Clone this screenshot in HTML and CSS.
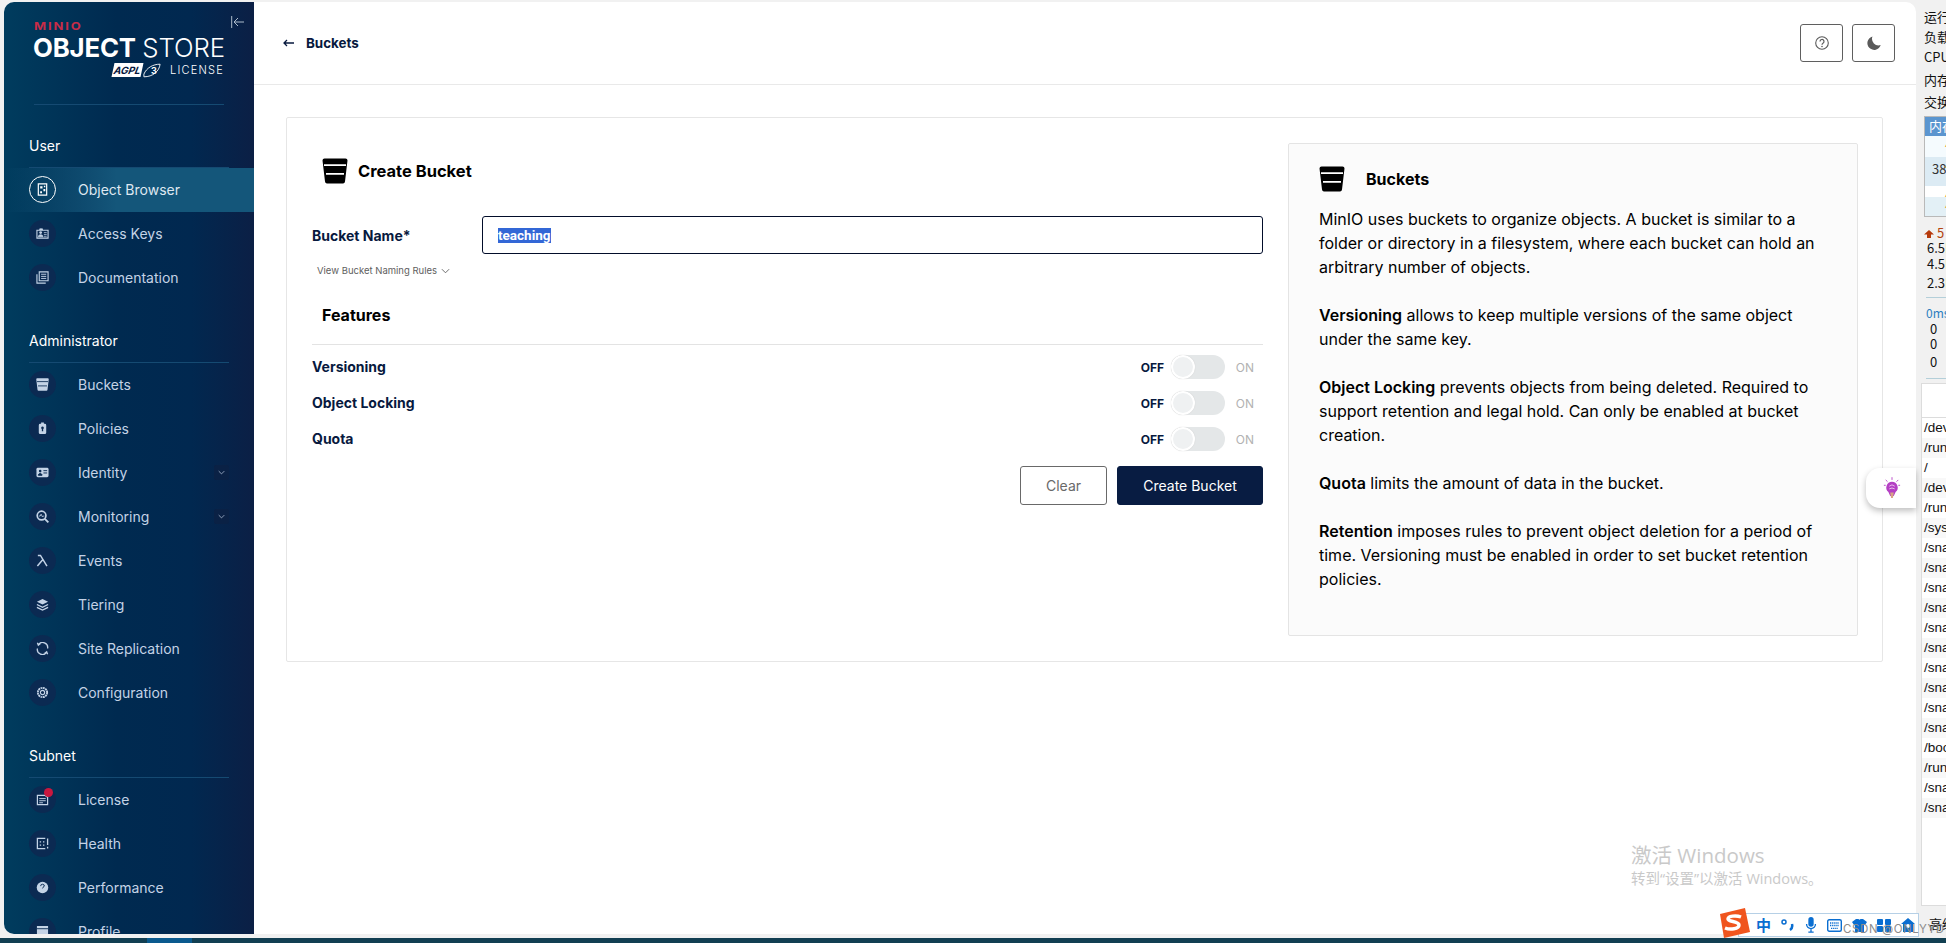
FILE: index.html
```html
<!DOCTYPE html>
<html lang="en">
<head>
<meta charset="utf-8">
<title>Create Bucket</title>
<link rel="stylesheet" href="styles.css">
</head>
<body>
<svg class="defs" width="0" height="0" aria-hidden="true">
  <symbol id="bucket" viewBox="0 0 26 26">
    <path d="M.5 2.500Q.5 .5 2.500 .5H23.500Q25.500 .5 25.500 2.500L23 23.500Q22.800 25.500 21 25.500H5Q3.200 25.500 3 23.500Z" fill="currentColor"/>
    <path class="bk-line" d="M2 7.200H24M4 15.800H22" stroke-width="1.700" fill="none"/>
  </symbol>
  <symbol id="chev" viewBox="0 0 10 6"><path d="M1 1l4 4 4-4" fill="none" stroke="currentColor" stroke-width="1"/></symbol>
</svg>

<div class="window">
  <aside class="sidebar">
    <svg class="collapse" viewBox="0 0 13 12"><path d="M.7 0V12M13 6H3M7 2L3 6l4 4" fill="none" stroke="#aebccb" stroke-width="1"/></svg>
    <div class="logo">
      <div class="logo-minio">MINIO</div>
      <div class="logo-main"><b>OBJECT</b> <span>STORE</span></div>
      <div class="logo-lic">
        <span class="agpl"><i>AGPL</i><svg viewBox="0 0 20 16" width="18" height="15"><path d="M1 12C4 5 11 1 19 1 18 9 11 15 1 15Z" fill="none" stroke="#fff" stroke-width="1"/><text x="9" y="12" class="agpl-3">3</text></svg></span>
        <span class="lic">LICENSE</span>
      </div>
    </div>

    <div class="group-title">User</div>
    <a class="item active"><span class="ic"><svg viewBox="0 0 14 14"><path d="M2.500 1h9v12h-9z" fill="none" stroke="currentColor" stroke-width="1.300"/><path d="M4.500 3.500h2.500v2.500h-2.500zM8 6.500h2v2.500h-2zM4.500 9h2v2h-2zM8.500 3h1.500v1.500h-1.500z" fill="currentColor"/></svg></span>Object Browser</a>
    <a class="item"><span class="ic"><svg viewBox="0 0 14 14"><path d="M1 3.500h12v8.500h-12z" fill="none" stroke="currentColor" stroke-width="1.200"/><circle cx="5" cy="6" r="1.500" fill="currentColor"/><path d="M2.500 10.500c0-3 5-3 5 0zM8.500 6h3M8.500 8h3M8.500 10h3M4 3.500v-1.500h3v1.500" fill="currentColor" stroke="currentColor" stroke-width=".8"/></svg></span>Access Keys</a>
    <a class="item"><span class="ic"><svg viewBox="0 0 14 14"><path d="M3.500 1h9.500v9.500h-9.500zM1 3.500v9.500h9.500" fill="none" stroke="currentColor" stroke-width="1.200"/><path d="M5.500 3.500h5.500M5.500 5.800h5.500M5.500 8h5.500" stroke="currentColor" stroke-width="1"/></svg></span>Documentation</a>

    <div class="group-title">Administrator</div>
    <a class="item"><span class="ic"><svg class="big"><use href="#bucket"/></svg></span>Buckets</a>
    <a class="item"><span class="ic"><svg viewBox="0 0 14 14"><path d="M5.500 .5h3v1.500h1q1.500 0 1.500 1.500v8q0 1.500-1.500 1.500h-5q-1.500 0-1.500-1.500v-8q0-1.500 1.500-1.500h1z" fill="currentColor"/><path d="M7 4.800a1.500 1.500 0 0 1 .7 2.800v2.400h-1.400v-2.400a1.500 1.500 0 0 1 .7-2.800z" fill="#0b2a52"/></svg></span>Policies</a>
    <a class="item"><span class="ic"><svg viewBox="0 0 14 14"><rect x=".5" y="2" width="13" height="10" rx="1.500" fill="currentColor"/><circle cx="4.500" cy="5.500" r="1.400" fill="#0b2a52"/><path d="M2.500 10c0-2.500 4-2.500 4 0zM8 5h4M8 7.500h4" fill="#0b2a52" stroke="#0b2a52"/></svg></span>Identity<span class="exp"><svg><use href="#chev"/></svg></span></a>
    <a class="item"><span class="ic"><svg viewBox="0 0 14 14"><circle cx="6" cy="6" r="4.700" fill="none" stroke="currentColor" stroke-width="1.800"/><path d="M9.500 9.500l3.800 3.800" stroke="currentColor" stroke-width="2"/><path d="M3 6.500h1.500l1-2 1.500 3 .8-1h1.200" fill="none" stroke="currentColor" stroke-width=".9"/></svg></span>Monitoring<span class="exp"><svg><use href="#chev"/></svg></span></a>
    <a class="item"><span class="ic"><svg viewBox="0 0 14 14"><path d="M2 1.500h2.800l7 11.500M7 6.500L1.500 13" fill="none" stroke="currentColor" stroke-width="1.600"/></svg></span>Events</a>
    <a class="item"><span class="ic"><svg viewBox="0 0 14 14"><path d="M7 1l6 3-6 3-6-3z" fill="currentColor"/><path d="M1 7l6 3 6-3M1 10l6 3 6-3" fill="none" stroke="currentColor" stroke-width="1.500"/></svg></span>Tiering</a>
    <a class="item"><span class="ic"><svg viewBox="0 0 14 14"><path d="M2.500 3A5.500 5.500 0 0 1 12.500 7M11.500 11A5.500 5.500 0 0 1 1.500 7M4.800 1.500L2.500 3.500 1.500 .8M9.200 12.500l2.300-2 1 2.700" fill="none" stroke="currentColor" stroke-width="1.400"/></svg></span>Site Replication</a>
    <a class="item"><span class="ic"><svg viewBox="0 0 14 14"><circle cx="7" cy="7" r="5" fill="none" stroke="currentColor" stroke-width="2" stroke-dasharray="2 .6"/><circle cx="7" cy="7" r="2.300" fill="none" stroke="currentColor" stroke-width="1.200"/></svg></span>Configuration</a>

    <div class="group-title">Subnet</div>
    <a class="item"><span class="ic"><svg viewBox="0 0 14 14"><path d="M1.500 2.500h8l3 2v8h-11z" fill="none" stroke="currentColor" stroke-width="1.300"/><path d="M3.500 6h7M3.500 8.300h7M3.500 10.500h4" stroke="currentColor" stroke-width="1"/></svg><span class="dot"></span></span>License</a>
    <a class="item"><span class="ic"><svg viewBox="0 0 14 14"><path d="M10 1.500h-8.500v11h8.500M12.500 1.500v7M12.500 10.500v2" fill="none" stroke="currentColor" stroke-width="1.400"/><path d="M4 4.500h1.500v1.500h-1.500zM7.500 4.500h1.500v1.500h-1.500zM4 8h1.500v1.500h-1.500zM7.500 8h1.500v1.500h-1.500z" fill="currentColor"/></svg></span>Health</a>
    <a class="item"><span class="ic"><svg viewBox="0 0 14 14"><circle cx="7" cy="7" r="6.200" fill="currentColor"/><path d="M5 5.500a2 2 0 0 1 4 0M7 8l2-3" fill="none" stroke="#0b2a52" stroke-width="1"/></svg></span>Performance</a>
    <a class="item"><span class="ic"><svg viewBox="0 0 14 14"><path d="M1 1h12v12h-12z" fill="currentColor"/><path d="M1 4h12" stroke="#0b2a52"/></svg></span>Profile</a>
  </aside>

  <main class="main">
    <header class="topbar">
      <a class="back"><svg viewBox="0 0 11 8" width="11" height="8"><path d="M11 4H1M4 1L1 4l3 3" fill="none" stroke="#07193e" stroke-width="1.300"/></svg><span>Buckets</span></a>
      <div class="top-actions">
        <button class="tool"><svg viewBox="0 0 14 14" width="14" height="14"><circle cx="7" cy="7" r="6.300" fill="none" stroke="#5a5a5a" stroke-width="1.100"/><path d="M5 5.500a2 2 0 1 1 3 1.700c-.8.500-1 .8-1 1.600" fill="none" stroke="#5a5a5a" stroke-width="1.200"/><circle cx="7" cy="10.500" r=".8" fill="#5a5a5a"/></svg></button>
        <button class="tool"><svg viewBox="0 0 14 14" width="14" height="14"><path d="M5.500 .5A6.800 6.800 0 1 0 13.700 9 6.500 6.500 0 0 1 5.500 .5z" fill="#5a5a5a"/></svg></button>
      </div>
    </header>

    <section class="card">
      <div class="form">
        <h1 class="form-title"><svg class="bucket-lg"><use href="#bucket"/></svg>Create Bucket</h1>
        <div class="field">
          <label class="field-label">Bucket Name*</label>
          <div class="input"><span class="sel">teaching</span></div>
        </div>
        <div class="rules">View Bucket Naming Rules<svg><use href="#chev"/></svg></div>
        <h2 class="features">Features</h2>
        <div class="rule"></div>
        <div class="row"><span class="row-label">Versioning</span><span class="sw"><b>OFF</b><i class="track"><i class="knob"></i></i><em>ON</em></span></div>
        <div class="row"><span class="row-label">Object Locking</span><span class="sw"><b>OFF</b><i class="track"><i class="knob"></i></i><em>ON</em></span></div>
        <div class="row"><span class="row-label">Quota</span><span class="sw"><b>OFF</b><i class="track"><i class="knob"></i></i><em>ON</em></span></div>
        <div class="actions">
          <button class="btn clear">Clear</button>
          <button class="btn primary">Create Bucket</button>
        </div>
      </div>
      <div class="info">
        <h2 class="info-title"><svg class="bucket-lg"><use href="#bucket"/></svg>Buckets</h2>
        <p>MinIO uses buckets to organize objects. A bucket is similar to a folder or directory in a filesystem, where each bucket can hold an arbitrary number of objects.</p>
        <p><b>Versioning</b> allows to keep multiple versions of the same object under the same key.</p>
        <p><b>Object Locking</b> prevents objects from being deleted. Required to support retention and legal hold. Can only be enabled at bucket creation.</p>
        <p><b>Quota</b> limits the amount of data in the bucket.</p>
        <p><b>Retention</b> imposes rules to prevent object deletion for a period of time. Versioning must be enabled in order to set bucket retention policies.</p>
      </div>
    </section>
  </main>
</div>

<div class="bulb">
  <svg viewBox="0 0 20 24" width="18" height="22"><path d="M10 5a6.500 6.500 0 0 1 4 11.500L12 21H8l-2-4.500A6.500 6.500 0 0 1 10 5z" fill="#b43fc4"/><path d="M8 17h4l-1 6H9z" fill="#d8a384"/><path d="M7 10q3-3 6 0M7 13q3-2 6 0" stroke="#f1c7f2" fill="none"/><path d="M10 0v3M3 3l2 2M17 3l-2 2M1 9h2M17 9h2" stroke="#b43fc4"/></svg>
</div>

<aside class="side-app">
  <div class="sys"><div class="l1">运行时间</div><div class="l2">负载状态</div><div class="l3">CPU使用</div><div class="l4">内存使用</div><div class="l5">交换分区</div></div>
  <div class="mem">
    <div class="mem-h">内存</div>
    <div class="mem-r a"><span class="or">4</span></div>
    <div class="mem-r b">38<span class="or">4</span></div>
    <div class="mem-r c"><span class="or">4</span></div>
    <div class="mem-r d"><span class="or">4</span></div>
  </div>
  <div class="net"><span class="arrow"></span><span class="up">5↑</span></div>
  <div class="num">6.5MB</div><div class="num">4.5MB</div><div class="num n3">2.3MB</div>
  <div class="hr"></div>
  <div class="ms">0ms</div>
  <div class="zero">0</div><div class="zero z2">0</div><div class="zero z3">0</div>
  <div class="hr h2"></div>
  <div class="disk">
    <div class="disk-h"></div>
    <div class="d">/dev/sda</div><div class="d alt">/run/lock</div><div class="d">/</div><div class="d alt">/dev/shm</div><div class="d">/run/user</div><div class="d alt">/sys/fs</div>
    <div class="d">/snap/a</div><div class="d alt">/snap/b</div><div class="d">/snap/c</div><div class="d alt">/snap/d</div><div class="d">/snap/e</div><div class="d alt">/snap/f</div><div class="d">/snap/g</div><div class="d alt">/snap/h</div><div class="d">/snap/i</div><div class="d alt">/snap/j</div>
    <div class="d">/boot</div><div class="d alt">/run/x</div><div class="d">/snap/k</div><div class="d alt">/snap/l</div>
  </div>
  <div class="adv">高级</div>
</aside>

<div class="activate"><div class="a1">激活 Windows</div><div class="a2">转到“设置”以激活 Windows。</div></div>

<div class="ime">
  <svg class="sogou" viewBox="0 0 32 30" width="32" height="30"><path d="M2 6L27 0l5 24-26 6z" fill="#f0551e"/><path d="M23 9c-5-2-13-1-13 2s11 2 11 6-9 5-14 3" fill="none" stroke="#fff" stroke-width="3.500"/></svg>
  <span class="zh">中</span>
  <svg viewBox="0 0 14 12" width="14" height="12"><circle cx="3" cy="3" r="2" fill="none" stroke="#0a6ed1" stroke-width="1.500"/><path d="M11 5q1 4-2 6" stroke="#0a6ed1" stroke-width="2.500" fill="none"/></svg>
  <svg viewBox="0 0 12 18" width="12" height="16"><rect x="3" y="0" width="6" height="11" rx="3" fill="#0a6ed1"/><path d="M1 8a5 5 0 0 0 10 0M6 13v4M3 17h6" stroke="#0a6ed1" stroke-width="1.500" fill="none"/></svg>
  <svg viewBox="0 0 15 13" width="15" height="13"><rect x=".7" y=".7" width="13.600" height="11.600" rx="1.500" fill="none" stroke="#0a6ed1" stroke-width="1.400"/><path d="M3 4h9M3 6.500h9M4 9.300h7" stroke="#0a6ed1" stroke-width="1.300" stroke-dasharray="1.300 .8"/></svg>
  <svg viewBox="0 0 15 13" width="15" height="13"><path d="M4 0h2.500q1 1.500 2 0H11l4 3-2 3-1-.5V13H3V5.500L2 6 0 3z" fill="#0a6ed1"/></svg>
  <svg viewBox="0 0 14 13" width="14" height="13"><rect width="6" height="6" rx="1" fill="#0a6ed1"/><rect x="8" width="6" height="6" rx="1" fill="#0a6ed1"/><rect y="7" width="6" height="6" rx="1" fill="#0a6ed1"/><rect x="8" y="7" width="6" height="6" rx="1" fill="#0a6ed1"/></svg>
  <svg viewBox="0 0 14 14" width="14" height="14"><path d="M7 0l7 6h-2v8H2V6H0z" fill="#0a6ed1"/><circle cx="7" cy="8" r="2" fill="#fff"/></svg>
</div>
<div class="watermark">CSDN @ONLYYD</div>

<footer class="taskbar"><span class="tb-blue"></span></footer>
</body>
</html>
```
FILE: styles.css
```css
* { box-sizing: border-box; }
html, body { margin: 0; height: 100%; }
body {
  position: relative;
  width: 1946px;
  height: 943px;
  overflow: hidden;
  background: #f1f1f1;
  font-family: Inter, "Noto Sans CJK SC", sans-serif;
  color: #07193e;
}
.defs { position: absolute; }
.bk-line { stroke: var(--gap, #fff); }

.window {
  position: absolute;
  left: 4px;
  top: 2px;
  width: 1912px;
  height: 932px;
  display: flex;
  background: #fff;
  border-radius: 10px;
  overflow: hidden;
}

/* Sidebar */
.sidebar {
  position: relative;
  flex: 0 0 250px;
  height: 932px;
  padding: 0 25px;
  overflow: hidden;
  background: linear-gradient(90deg, #003c5e 0%, #002a50 45%, #012850 75%, #0b1f45 100%);
  --gap: #0b2a52;
}
.collapse { position: absolute; left: 227px; top: 14px; width: 13px; height: 12px; }
.logo {
  height: 103px;
  margin: 0 5px;
  padding-top: 18px;
  border-bottom: 1px solid #154a72;
  color: #fff;
}
.logo-minio {
  height: 12px;
  font-size: 11px;
  line-height: 12px;
  font-weight: 700;
  letter-spacing: 1.6px;
  color: #c72c48;
  transform-origin: left;
  transform: scaleX(1.18);
}
.logo-main {
  display: flex;
  justify-content: space-between;
  margin: 3px -1px 0;
  height: 26px;
  font-size: 25.800px;
  line-height: 26px;
  white-space: nowrap;
}
.logo-main b { font-weight: 700; letter-spacing: -.2px; }
.logo-main span { font-weight: 300; letter-spacing: -.1px; }
.logo-lic {
  display: flex;
  justify-content: flex-end;
  align-items: center;
  gap: 9px;
  margin-top: 1px;
  height: 16px;
}
.agpl { display: flex; align-items: center; gap: 1px; }
.agpl i {
  display: block;
  background: #fff;
  color: #07193e;
  font-size: 10px;
  line-height: 14px;
  font-weight: 700;
  padding: 0 1px;
  transform: skewX(-12deg);
}
.agpl-3 { font: 700 10px Inter, sans-serif; fill: #fff; }
.lic { font-size: 11px; letter-spacing: 1.2px; font-weight: 300; }

.group-title {
  margin-top: 21px;
  height: 42px;
  padding-top: 11px;
  font-size: 14px;
  line-height: 18px;
  color: #fff;
  border-bottom: 1px solid #154a72;
}
.item {
  display: flex;
  align-items: center;
  height: 44px;
  margin: 0 -25px;
  padding: 0 25px 1px;
  font-size: 14px;
  color: #c4d3e6;
}
.item.active {
  color: #dfe8f1;
  background: linear-gradient(90deg, rgba(20,86,122,0) 0%, #14567a 45%, #14567a 100%);
}
.ic {
  position: relative;
  flex: none;
  width: 27px;
  height: 27px;
  margin-right: 22px;
  border-radius: 50%;
  background: #0b2a52;
  display: flex;
  align-items: center;
  justify-content: center;
}
.ic svg { width: 13px; height: 13px; color: #c4d3e6; }
.ic svg.big { width: 13px; height: 13px; }
.active .ic { background: transparent; border: 1px solid #fff; }
.active .ic svg { color: #fff; }
.dot {
  position: absolute;
  right: 3px;
  top: 4px;
  width: 9px;
  height: 9px;
  transform: translate(0, -2px);
  border-radius: 50%;
  background: #c8183f;
}
.exp {
  margin-left: auto;
  width: 15px;
  height: 15px;
  border-radius: 2px;
  background: #0a2145;
  display: flex;
  align-items: center;
  justify-content: center;
}
.exp svg { width: 7px; height: 5px; color: #c4d3e6; }

/* Main */
.main { flex: 1; min-width: 0; }
.topbar {
  height: 83px;
  padding: 0 21px 0 29px;
  border-bottom: 1px solid #e9e9e9;
  display: flex;
  align-items: center;
  justify-content: space-between;
}
.back { display: flex; align-items: center; gap: 12px; font-size: 13.400px; font-weight: 700; }
.top-actions { display: flex; gap: 9px; }
.tool {
  width: 43px;
  height: 38px;
  padding: 0;
  display: flex;
  align-items: center;
  justify-content: center;
  background: #fff;
  border: 1px solid #5f5f5f;
  border-radius: 3px;
}
.card {
  display: flex;
  gap: 25px;
  margin: 32px 33px 0 32px;
  height: 545px;
  padding: 26px 25px 24px 25px;
  background: #fff;
  border: 1px solid #e6e6e6;
  border-radius: 2px;
}
.form { flex: 0 0 951px; }
.form-title {
  display: flex;
  align-items: center;
  height: 54px;
  margin: 0;
  padding-left: 10px;
  gap: 10px;
  font-size: 16.500px;
  font-weight: 700;
  color: #000;
}
.bucket-lg { width: 26px; height: 26px; color: #000; flex: none; }
.field { display: flex; align-items: center; margin-top: 18px; }
.field-label { flex: 0 0 170px; font-size: 14px; font-weight: 700; }
.input {
  flex: 1;
  height: 38px;
  padding: 0 15px;
  display: flex;
  align-items: center;
  border: 1px solid #020d2a;
  border-radius: 3px;
}
.sel {
  display: block;
  height: 15px;
  font: 700 13.500px/15px Roboto, sans-serif;
  background: #3367d6;
  color: #fff;
}
.rules {
  display: flex;
  align-items: center;
  gap: 4px;
  height: 14px;
  margin: 10px 0 0 5px;
  font-size: 9.500px;
  line-height: 14px;
  color: #5e5e5e;
}
.rules svg { width: 9px; height: 6px; color: #5e5e5e; }
.features { margin: 26px 0 0 10px; height: 22px; font-size: 16px; line-height: 22px; font-weight: 700; color: #000; }
.rule { height: 1px; margin-top: 18px; background: #e3e3e3; }
.rule + .row { margin-top: 4px; }
.row { display: flex; align-items: center; justify-content: space-between; height: 36px; }
.row-label { font-size: 14px; font-weight: 700; margin-top: -2px; }
.sw { display: flex; align-items: center; font-size: 12px; padding-right: 9px; }
.sw b { font-weight: 700; width: 30px; }
.sw em { font-style: normal; color: #b2b2b2; margin-left: 11px; }
.track { display: block; position: relative; width: 54px; height: 24px; border-radius: 12px; background: #e4e7e8; }
.knob { display: block; position: absolute; left: 0; top: 0; width: 24px; height: 24px; border-radius: 50%; background: #eff1f2; border: 2px solid #fff; box-shadow: 0 0 1px #c5c5c5; }
.actions { display: flex; justify-content: flex-end; gap: 10px; margin-top: 9px; }
.btn { height: 39px; padding: 0; border-radius: 3px; font: 400 14px Inter, sans-serif; }
.btn.clear { width: 87px; background: #fff; border: 1px solid #696969; color: #696969; }
.btn.primary { width: 146px; background: #081c42; border: 1px solid #081c42; color: #fff; }

.info {
  flex: 0 0 570px;
  height: 493px;
  margin-top: -1px;
  padding: 21px 30px 0 30px;
  background: #fbfbfb;
  border: 1px solid #e4e4e4;
  border-radius: 2px;
  font-size: 16px;
  line-height: 24px;
  color: #000;
}
.info-title {
  display: flex;
  align-items: center;
  gap: 21px;
  height: 28px;
  margin: 0 0 14px;
  font-size: 16px;
  font-weight: 700;
}
.info p { margin: 0 0 24px; }
.info b { font-weight: 600; }

/* Overlays */
.bulb {
  position: absolute;
  left: 1866px;
  top: 468px;
  width: 50px;
  height: 40px;
  display: flex;
  align-items: center;
  padding-left: 17px;
  background: #fff;
  border-radius: 14px 0 0 14px;
  box-shadow: 0 3px 6px rgba(0,0,0,.25);
}
.side-app {
  position: absolute;
  left: 1920px;
  top: 0;
  width: 26px;
  height: 937px;
  overflow: hidden;
  font-size: 13px;
  color: #111;
  white-space: nowrap;
  font-family: "Noto Sans CJK SC", sans-serif;
}
.sys { position: absolute; left: 4px; top: 0; }
.sys div { position: absolute; left: 0; line-height: 16px; }
.l1 { top: 9px; } .l2 { top: 29px; } .l3 { top: 49px; } .l4 { top: 72px; } .l5 { top: 94px; }
.mem { position: absolute; left: 4px; top: 116px; width: 40px; height: 101px; border: 1px solid #b9b9b9; border-right: 0; font-size: 13px; }
.mem-h { height: 19px; line-height: 18px; padding-left: 4px; background: #5b95cf; color: #fff; }
.mem-r { position: relative; color: #333; padding-left: 7px; }
.mem-r.a { height: 21px; background: #f5fbfe; }
.mem-r.b { height: 29px; line-height: 24px; background: #dcebf4; }
.mem-r.c { height: 11px; background: #fff; }
.mem-r.d { height: 19px; background: #e3f0f6; }
.or { position: absolute; left: 20px; top: 2px; line-height: 14px; color: #e8a64c; }
.net { position: absolute; left: 4px; top: 225px; line-height: 16px; }
.arrow { display: inline-block; width: 10px; height: 8px; background: #b63a0c; clip-path: polygon(50% 0, 100% 55%, 70% 55%, 70% 100%, 30% 100%, 30% 55%, 0 55%); }
.up { margin-left: 3px; color: #b4450f; }
.num { position: absolute; left: 7px; top: 240px; line-height: 16px; }
.num + .num { top: 256px; }
.num + .num + .num { top: 275px; }
.hr { position: absolute; left: 6px; top: 297px; width: 30px; height: 1px; background: #b4cfd9; }
.hr.h2 { top: 378px; }
.ms { position: absolute; left: 6px; top: 305px; line-height: 16px; font-size: 12px; color: #2b7fc0; }
.zero { position: absolute; left: 10px; top: 321px; line-height: 16px; }
.zero.z2 { top: 336px; } .zero.z3 { top: 354px; }
.disk { position: absolute; left: 1px; top: 383px; width: 60px; height: 523px; border: 1px solid #dcdcdc; background: #fff; font-size: 13.500px; font-family: "Liberation Sans", sans-serif; }
.disk-h { height: 34px; border-bottom: 1px solid #dcdcdc; }
.d { height: 20px; line-height: 20px; padding-left: 2px; }
.d.alt { background: #f8f8f8; }
.adv { position: absolute; left: 9px; top: 915px; line-height: 18px; font-size: 13px; }

.activate { position: absolute; left: 1631px; top: 841px; color: #c9c9c9; font-family: "Open Sans", "Noto Sans CJK SC", sans-serif; white-space: nowrap; }
.a1 { font-size: 20.500px; line-height: 28px; }
.a2 { font-size: 14.500px; line-height: 20px; }
.ime {
  position: absolute;
  left: 1738px;
  top: 913px;
  width: 181px;
  height: 24px;
  display: flex;
  align-items: center;
  gap: 10px;
  padding-left: 17px;
  background: #fff;
  border: 1px solid #b6d0e6;
}
.sogou { position: absolute; left: -21px; top: -6px; }
.zh { font: 700 15px/20px "Noto Sans CJK SC", sans-serif; color: #0a6ed1; }
.watermark { position: absolute; left: 1843px; top: 922px; font: 400 11.500px/14px Inter, sans-serif; color: #8c8c8c; letter-spacing: .6px; }
.taskbar { position: absolute; left: 0; right: 0; top: 938px; height: 5px; background: #123f52; }
.tb-blue { display: block; width: 45px; height: 5px; margin-left: 147px; background: #0a5a8e; }
```
